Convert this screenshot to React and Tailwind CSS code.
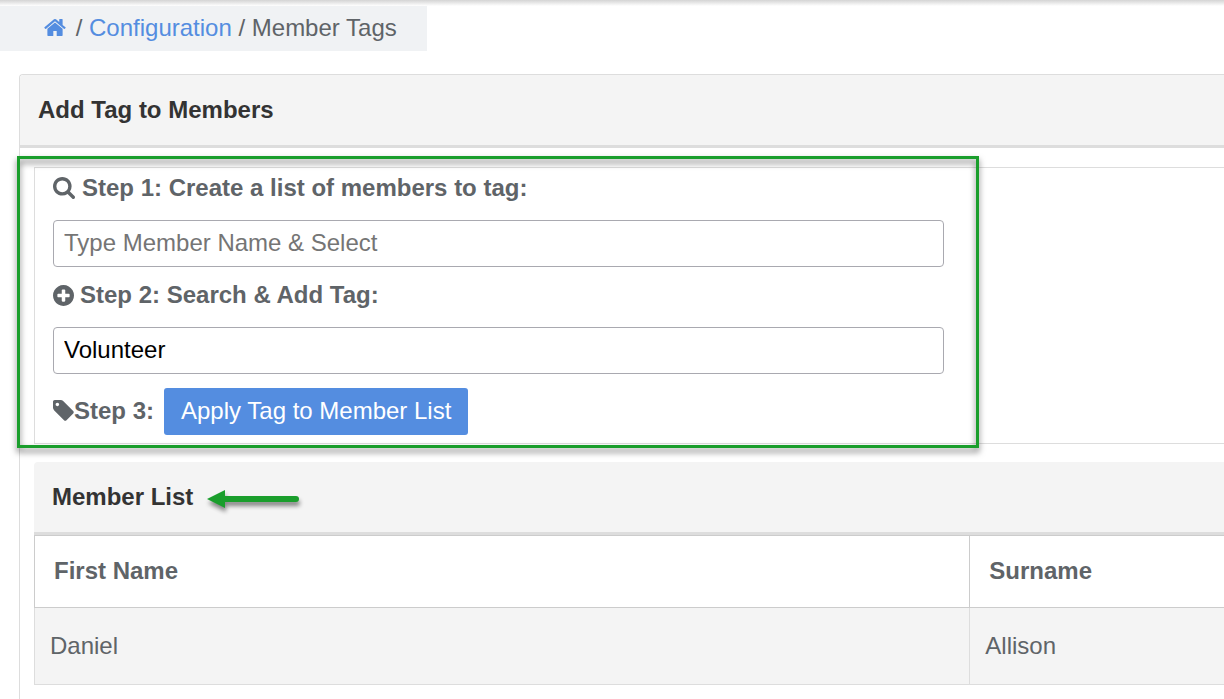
import React, { useState } from 'react';

const HomeIcon = () => (
  <svg viewBox="64 253 1664 1283" className="w-[22px] h-[17px] shrink-0" fill="currentColor" aria-hidden="true">
    <path d="M1472 992v480q0 26-19 45t-45 19h-384v-384h-256v384h-384q-26 0-45-19t-19-45v-480q0-1 .5-3t.5-3l575-474 575 474q1 2 1 6zm223-69l-62 74q-8 9-21 11h-3q-13 0-21-7l-692-577-692 577q-12 8-24 7-13-2-21-11l-62-74q-8-10-7-23.5t11-21.5l719-599q32-26 76-26t76 26l244 204v-195q0-14 9-23t23-9h192q14 0 23 9t9 23v408l219 182q10 8 11 21.5t-7 23.5z" />
  </svg>
);

const SearchIcon = () => (
  <svg viewBox="64 128 1664 1664" className="w-[22px] h-[22px] shrink-0" fill="currentColor" aria-hidden="true">
    <path d="M1216 832q0-185-131.5-316.5t-316.5-131.5-316.5 131.5-131.5 316.5 131.5 316.5 316.5 131.5 316.5-131.5 131.5-316.5zm512 832q0 52-38 90t-90 38q-54 0-90-38l-343-342q-179 124-399 124-143 0-273.5-55.5t-225-150-150-225-55.5-273.5 55.5-273.5 150-225 225-150 273.5-55.5 273.5 55.5 225 150 150 225 55.5 273.5q0 220-124 399l343 343q37 37 37 90z" />
  </svg>
);

const PlusCircleIcon = () => (
  <svg viewBox="128 128 1536 1536" className="w-[21px] h-[21px] shrink-0" fill="currentColor" aria-hidden="true">
    <path d="M1344 960v-128q0-26-19-45t-45-19h-256v-256q0-26-19-45t-45-19h-128q-26 0-45 19t-19 45v256h-256q-26 0-45 19t-19 45v128q0 26 19 45t45 19h256v256q0 26 19 45t45 19h128q26 0 45-19t19-45v-256h256q26 0 45-19t19-45zm320-64q0 209-103 385.5t-279.5 279.5-385.5 103-385.5-103-279.5-279.5-103-385.5 103-385.5 279.5-279.5 385.5-103 385.5 103 279.5 279.5 103 385.5z" />
  </svg>
);

const TagIcon = () => (
  <svg viewBox="128 128 1536 1536" className="w-[21px] h-[21px] shrink-0" fill="currentColor" aria-hidden="true">
    <path d="M576 448q0-53-37.5-90.5t-90.5-37.5-90.5 37.5-37.5 90.5 37.5 90.5 90.5 37.5 90.5-37.5 37.5-90.5zm1067 576q0 53-37 90l-491 492q-39 37-91 37-53 0-90-37l-715-716q-38-37-64.5-101t-26.5-117v-416q0-52 38-90t90-38h416q53 0 117 26.5t102 64.5l715 714q37 39 37 91z" />
  </svg>
);

const ArrowLeft = () => (
  <svg
    viewBox="0 0 92 18"
    className="w-[92px] h-[18px] mt-1 shrink-0 overflow-visible drop-shadow-[1px_4px_2px_rgba(0,0,0,0.45)]"
    aria-hidden="true"
  >
    <path d="M0 9L18 0v18z" fill="#1a9e2c" />
    <path d="M16 9h73" stroke="#1a9e2c" strokeWidth="6" strokeLinecap="round" />
  </svg>
);

const members = [{ firstName: 'Daniel', surname: 'Allison' }];

const inputClass =
  'block w-full h-[47px] px-[10px] pb-[2px] border border-[#a9a9b0] rounded-[4px] bg-white text-black placeholder:text-[#757575] outline-none';

export default function App() {
  const [memberName, setMemberName] = useState('');
  const [tag, setTag] = useState('Volunteer');

  return (
    <div className="min-h-screen overflow-hidden bg-white font-['Liberation_Sans',Arial,sans-serif] text-[24px] leading-[30px] text-[#5f6468]">
      <div className="h-[6px] bg-linear-to-b from-[#d4d4d4] to-white" />

      <nav aria-label="Breadcrumb" className="flex w-fit items-center h-[45px] pl-[44px] pr-[30px] pb-[2px] bg-[#f0f2f4]">
        <a href="#home" aria-label="Home" className="text-[#548de0]">
          <HomeIcon />
        </a>
        <span className="whitespace-pre pl-[3px]"> / </span>
        <a href="#configuration" className="text-[#548de0]">Configuration</a>
        <span className="whitespace-pre"> / Member Tags</span>
      </nav>

      <main className="ml-[19px] mt-[23px] border-l border-t border-[#ddd] rounded-tl-[4px]">
        <h1 className="px-[18px] py-5 bg-[#f4f4f4] border-b-3 border-[#ddd] rounded-tl-[4px] font-bold text-[#333]">
          Add Tag to Members
        </h1>

        <div className="pl-[14px] pt-[19px] pb-[14px]">
          <section className="border-l border-y border-[#ddd]">
            <div className="relative w-[79.4%] pl-[18px] pr-[35px] pt-1 pb-2">
              <label htmlFor="member-name" className="flex items-center gap-[7px] h-8 font-bold">
                <SearchIcon />
                Step 1: Create a list of members to tag:
              </label>
              <input
                id="member-name"
                type="text"
                className={`${inputClass} mt-4`}
                placeholder="Type Member Name & Select"
                value={memberName}
                onChange={(e) => setMemberName(e.target.value)}
              />
              <label htmlFor="tag-name" className="flex items-center gap-[6px] h-8 mt-3 font-bold">
                <PlusCircleIcon />
                Step 2: Search &amp; Add Tag:
              </label>
              <input
                id="tag-name"
                type="text"
                className={`${inputClass} mt-4`}
                value={tag}
                onChange={(e) => setTag(e.target.value)}
              />
              <div className="flex items-center mt-[14px]">
                <div className="flex items-center pb-[2px] font-bold">
                  <TagIcon />
                  Step 3:
                </div>
                <button
                  type="button"
                  className="ml-[10px] h-[47px] px-[17px] pb-[2px] rounded-[3px] bg-[#548de0] text-white whitespace-nowrap"
                >
                  Apply Tag to Member List
                </button>
              </div>

              <div className="absolute -left-[18px] right-0 -top-3 -bottom-[5px] border-3 border-[#1a9e2c] pointer-events-none drop-shadow-[0_4px_3px_rgba(0,0,0,0.55)]" />
            </div>
          </section>

          <section className="mt-[18px]">
            <div className="flex items-center gap-[14px] px-[18px] py-5 bg-[#f4f4f4] border-b-3 border-[#ddd] rounded-tl-[4px]">
              <h2 className="font-bold text-[#333]">Member List</h2>
              <ArrowLeft />
            </div>
            <table className="w-full table-fixed border-separate border-spacing-0 text-left">
              <thead>
                <tr>
                  <th className="w-[78.6%] h-[73px] px-[19px] pb-[2px] border-l border-y border-[#ccc] font-bold">First Name</th>
                  <th className="h-[73px] px-[19px] pb-[2px] border-l border-y border-[#ccc] font-bold">Surname</th>
                </tr>
              </thead>
              <tbody>
                {members.map((member) => (
                  <tr key={member.firstName} className="bg-[#f4f4f4]">
                    <td className="h-[77px] px-[15px] border-l border-b border-[#ddd]">{member.firstName}</td>
                    <td className="h-[77px] px-[15px] border-l border-b border-[#ddd]">{member.surname}</td>
                  </tr>
                ))}
              </tbody>
            </table>
          </section>
        </div>
      </main>
    </div>
  );
}
